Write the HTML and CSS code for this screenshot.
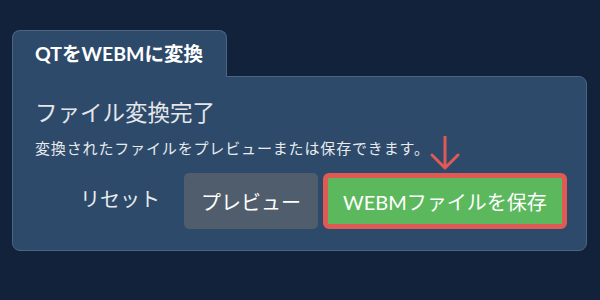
FILE: index.html
```html
<!DOCTYPE html>
<html lang="ja">
<head>
<meta charset="utf-8">
<link rel="stylesheet" href="styles.css">
</head>
<body>
<div class="card">
  <div class="tab">QTをWEBMに変換</div>
  <div class="panel">
    <h1 class="title">ファイル変換完了</h1>
    <p class="desc">変換されたファイルをプレビューまたは保存できます。</p>
    <div class="actions">
      <button class="btn btn-reset">リセット</button>
      <button class="btn btn-preview">プレビュー</button>
      <div class="save-wrap">
        <svg class="arrow" width="30" height="34" viewBox="0 0 30 34" aria-hidden="true">
          <path d="M15 1 V32 M2 19 L15 32 L28 19" fill="none" stroke="#e05a55" stroke-width="3" stroke-linecap="round" stroke-linejoin="round"/>
        </svg>
        <button class="btn btn-save">WEBMファイルを保存</button>
      </div>
    </div>
  </div>
</div>
</body>
</html>
```

FILE: styles.css
```css
html, body {
  margin: 0;
  padding: 0;
  background: #12223a;
}
body {
  width: 600px;
  height: 300px;
  padding: 30px 0 0 12px;
  box-sizing: border-box;
  font-family: Lato, "Noto Sans CJK JP", sans-serif;
}
.card {
  width: 575px;
}
.tab {
  display: inline-block;
  position: relative;
  z-index: 1;
  box-sizing: border-box;
  width: 215px;
  height: 47px;
  margin-bottom: -1px;
  padding: 11px 0 0 22px;
  background: #2d4a6a;
  border: 1px solid #4a6585;
  border-bottom: none;
  border-radius: 8px 8px 0 0;
  color: #ffffff;
  font-weight: 700;
  font-size: 19.5px;
  line-height: 24px;
  white-space: nowrap;
}
.panel {
  box-sizing: border-box;
  background: #2d4a6a;
  border: 1px solid #4a6585;
  border-radius: 0 8px 8px 8px;
  padding: 20px 19px 21px 22px;
}
.title {
  margin: 0;
  font-weight: 400;
  font-size: 22.5px;
  line-height: 32px;
  color: #e4e6ea;
}
.desc {
  margin: 9px 0 0;
  font-size: 15px;
  line-height: 20px;
  color: #e8eaee;
  letter-spacing: 0.85px;
  white-space: nowrap;
}
.actions {
  display: flex;
  justify-content: flex-end;
  align-items: center;
  gap: 5px;
  margin-top: 15px;
}
.btn {
  font-family: Lato, "Noto Sans CJK JP", sans-serif;
  font-size: 20px;
  border: none;
  border-radius: 5px;
  height: 56px;
  padding: 0 18px;
  color: #ffffff;
  cursor: pointer;
  white-space: nowrap;
}
.btn-reset {
  background: transparent;
  color: #e8eaee;
  margin-right: 1px;
  padding-bottom: 6px;
}
.btn-preview {
  background: #4f5d6c;
  width: 134px;
  padding: 0;
}
.save-wrap {
  position: relative;
}
.btn-save {
  display: block;
  width: 244px;
  padding: 0;
  background: #5cb85c;
  border: 5px solid #e05a55;
  border-radius: 6px;
}
.arrow {
  position: absolute;
  left: 107px;
  top: -37px;
}
```
